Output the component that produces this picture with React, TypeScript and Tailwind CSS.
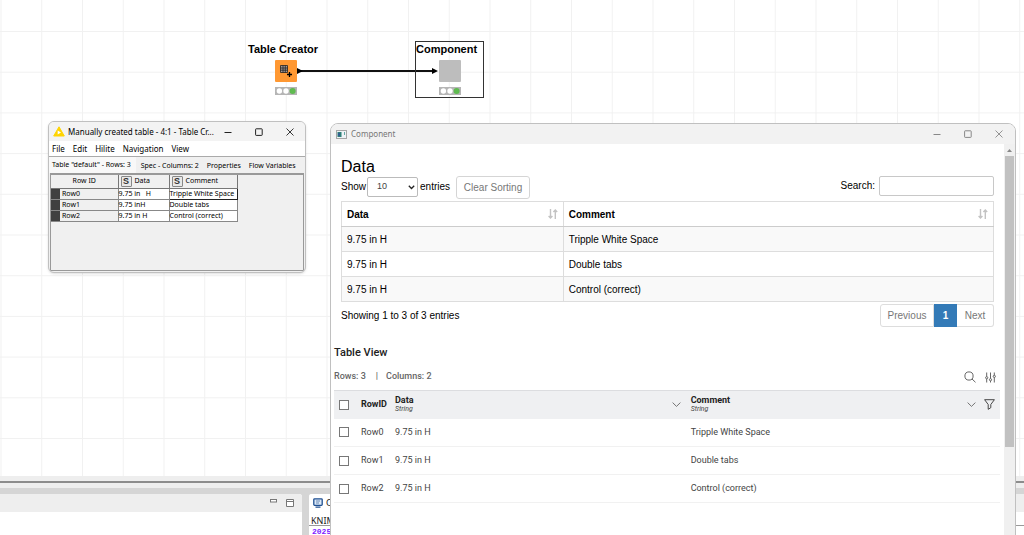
import React from "react";

const records = [
  { id: "Row0", raw: "9.75 in   H", data: "9.75 in H", comment: "Tripple White Space" },
  { id: "Row1", raw: "9.75 inH", data: "9.75 in H", comment: "Double tabs" },
  { id: "Row2", raw: "9.75 in H", data: "9.75 in H", comment: "Control (correct)" },
];

function CanvasGrid() {
  return (
    <svg className="absolute inset-0 h-full w-full" aria-hidden="true">
      <defs>
        <pattern id="grid" x="0.5" y="31" width="40.75" height="40.7" patternUnits="userSpaceOnUse">
          <path d="M0 .5H40.75M.5 0V40.7" stroke="#f1f1f1" strokeWidth="1" fill="none" />
        </pattern>
      </defs>
      <rect width="100%" height="100%" fill="url(#grid)" />
    </svg>
  );
}

function TrafficLight() {
  return (
    <svg width="22" height="8" viewBox="0 0 22 8" aria-hidden="true">
      <rect width="22" height="8" fill="#b5b5b5" />
      <circle cx="4.4" cy="4" r="2.7" fill="#fff" />
      <circle cx="11" cy="4" r="2.7" fill="#fff" />
      <circle cx="17.6" cy="4" r="3" fill="#5fbb50" />
    </svg>
  );
}

function WindowControls({ color }: { color: string }) {
  return (
    <div className={`flex items-center gap-[23px] ${color}`}>
      <button aria-label="Minimize">
        <svg width="8" height="8" viewBox="0 0 8 8" stroke="currentColor"><path d="M.5 4.5h7" /></svg>
      </button>
      <button aria-label="Maximize">
        <svg width="8" height="8" viewBox="0 0 8 8" stroke="currentColor" fill="none"><rect x=".6" y=".8" width="6.6" height="6.6" rx=".6" /></svg>
      </button>
      <button aria-label="Close">
        <svg width="8" height="8" viewBox="0 0 8 8" stroke="currentColor" strokeWidth=".9"><path d="M.5.5l7 7M7.5.5l-7 7" /></svg>
      </button>
    </div>
  );
}

function StringBadge() {
  return (
    <span className="flex h-[11px] w-[11px] items-center justify-center rounded-[1px] border border-[#888] bg-[#e8e8e8] font-['Liberation_Sans',sans-serif] text-[9px] leading-none font-bold text-[#333]">
      S
    </span>
  );
}

function TableWindow() {
  const tab = "px-[3px] leading-[14px]";
  return (
    <section className="absolute top-[121px] left-12 flex h-[152px] w-[258px] flex-col overflow-hidden rounded-md border border-[#c0c0c0] bg-[#f0f0f0] font-['Noto_Sans',sans-serif] text-[7px] text-black shadow-sm">
      <header className="flex h-[19px] shrink-0 items-center bg-[#f3f3f3] pr-[11px] pl-1">
        <svg width="12" height="11" viewBox="0 0 12 11" aria-hidden="true">
          <path d="M6 .8L11.3 10H.7z" fill="#ffd400" stroke="#ffd400" strokeLinejoin="round" />
          <path d="M4.7 4.6L8 6.6 4.7 8.5z" fill="#fff" />
        </svg>
        <span className="ml-[3px] flex-1 text-[8px] whitespace-nowrap">Manually created table - 4:1 - Table Cr...</span>
        <WindowControls color="text-[#222]" />
      </header>
      <nav className="flex h-4 shrink-0 items-center gap-2 border-b border-[#aaa] bg-white px-[3px] text-[8px]">
        {["File", "Edit", "Hilite", "Navigation", "View"].map((m) => (
          <button key={m}>{m}</button>
        ))}
      </nav>
      <div className="flex h-4 shrink-0 items-end gap-[2px] whitespace-nowrap">
        <button className="h-full bg-[#f8f8f8] pr-[5px] pl-[3px]">Table "default" - Rows: 3</button>
        <button className={tab}>Spec - Columns: 2</button>
        <button className={tab}>Properties</button>
        <button className={tab}>Flow Variables</button>
      </div>
      <div className="mx-px mb-px flex-1 border border-t-2 border-[#999]">
        <table className="w-[187px] table-fixed border-collapse text-[7px] leading-[10px] whitespace-pre">
          <colgroup>
            <col className="w-[67px]" />
            <col className="w-[51px]" />
            <col />
          </colgroup>
          <thead>
            <tr className="h-[13px]">
              <th className="border-r border-b border-[#777] p-0 font-normal">Row ID</th>
              <th className="border-r border-b border-[#777] p-0 font-normal">
                <span className="flex items-center gap-[3px] pl-[2px]"><StringBadge />Data</span>
              </th>
              <th className="border-r border-b border-[#777] p-0 font-normal">
                <span className="flex items-center gap-[3px] pl-[2px]"><StringBadge />Comment</span>
              </th>
            </tr>
          </thead>
          <tbody>
            {records.map((r, i) => (
              <tr key={r.id} className="h-[11px]">
                <td className="border-r border-b border-[#888] p-0">
                  <span className="flex h-[10px] items-center"><i className="mr-[2px] h-full w-[9px] bg-[#404040]" />{r.id}</span>
                </td>
                <td className="border-r border-b border-[#888] bg-white p-0">{r.raw}</td>
                <td className={i === 0 ? "border border-[#222] bg-white p-0" : "border-r border-b border-[#888] bg-white p-0"}>{r.comment}</td>
              </tr>
            ))}
          </tbody>
        </table>
      </div>
    </section>
  );
}

function SortIcon() {
  return (
    <svg width="10" height="10" viewBox="0 0 10 10" fill="none" stroke="#c3c3c3" strokeWidth="1.4" aria-hidden="true">
      <path d="M2.5 0v8.5M.6 7l1.9 2 1.9-2M7.3 10V1.5M5.4 3l1.9-2 1.9 2" />
    </svg>
  );
}

function DataTable() {
  return (
    <section className="px-[10px] font-['Liberation_Sans',sans-serif] text-[10px] text-black">
      <h1 className="pt-[14px] text-[16px] leading-[18px]">Data</h1>
      <div className="flex h-[25px] items-start">
        <label htmlFor="page-size" className="mr-px leading-[21px]">Show</label>
        <span className="relative flex pt-px">
          <select id="page-size" className="h-5 w-[51px] appearance-none rounded-[2px] border border-[#bbb] bg-white pl-[9px] text-[9px] text-[#444]">
            <option>10</option>
          </select>
          <svg className="pointer-events-none absolute top-[9px] right-[3px]" width="7" height="5" viewBox="0 0 7 5" fill="none" stroke="#222" strokeWidth="1.3"><path d="M.8.8l2.7 2.7L6.2.8" /></svg>
        </span>
        <span className="ml-[2px] leading-[21px]">entries</span>
        <button className="ml-[6px] h-[23px] w-[74px] rounded-[3px] border border-[#d5d5d5] text-[#777]">Clear Sorting</button>
        <label htmlFor="search" className="ml-auto leading-[19px]">Search:</label>
        <input id="search" className="ml-1 h-5 w-[115px] rounded-[2px] border border-[#c8c8c8]" />
      </div>
      <table className="w-full table-fixed border-collapse border border-[#ddd] text-left">
        <colgroup>
          <col className="w-[34%]" />
          <col />
        </colgroup>
        <thead>
          <tr className="h-[25px]">
            {["Data", "Comment"].map((h) => (
              <th key={h} className="border border-b-[#ccc] border-[#ddd] px-[5px] py-0">
                <span className="flex items-center justify-between">{h}<SortIcon /></span>
              </th>
            ))}
          </tr>
        </thead>
        <tbody>
          {records.map((r) => (
            <tr key={r.id} className="h-[25px] odd:bg-[#f9f9f9]">
              <td className="border border-[#ddd] px-[5px] py-0">{r.data}</td>
              <td className="border border-[#ddd] px-[5px] py-0">{r.comment}</td>
            </tr>
          ))}
        </tbody>
      </table>
      <div className="mt-px flex h-6 items-center">
        <span>Showing 1 to 3 of 3 entries</span>
        <nav className="ml-auto flex h-[23px] text-[#777]" aria-label="Pages">
          <button className="w-[54px] rounded-l-[3px] border border-[#ddd]">Previous</button>
          <button className="w-[23px] bg-[#337ab7] font-bold text-white">1</button>
          <button className="w-[37px] rounded-r-[3px] border border-l-0 border-[#ddd]">Next</button>
        </nav>
      </div>
    </section>
  );
}

function Chevron() {
  return (
    <svg width="9" height="5" viewBox="0 0 9 5" fill="none" stroke="#666" strokeWidth=".9" aria-hidden="true"><path d="M.6.6l3.9 3.8L8.4.6" /></svg>
  );
}

const box = "block h-[10px] w-[10px] appearance-none border border-[#777] bg-white";

function TableView() {
  return (
    <section className="mt-[18px] pr-1 pl-[3px] font-[Roboto,sans-serif] text-[9px] text-[#444]">
      <h2 className="text-[11px] leading-4 font-medium text-[#222]">Table View</h2>
      <div className="mt-2 flex h-4 items-center font-medium text-[#666]">
        <span>Rows: 3</span>
        <span className="mr-2 ml-[10px]">|</span>
        <span>Columns: 2</span>
        <button className="mr-[9px] ml-auto" aria-label="Search rows">
          <svg width="12" height="12" viewBox="0 0 12 12" fill="none" stroke="#555" strokeWidth=".9"><circle cx="5" cy="5" r="4.1" /><path d="M8 8l3.5 3.3" /></svg>
        </button>
        <button className="mr-1" aria-label="Settings">
          <svg width="11" height="11" viewBox="0 0 11 11" fill="none" stroke="#555" strokeWidth=".9">
            <path d="M1.7.5v4M1.7 7v3.5M5.5.5v6M5.5 9v1.5M9.3.5v2.7M9.3 5.7v4.8" />
            <circle cx="1.7" cy="5.7" r="1.1" /><circle cx="5.5" cy="7.7" r="1.1" /><circle cx="9.3" cy="4.4" r="1.1" />
          </svg>
        </button>
      </div>
      <table className="mt-[5px] w-full table-fixed border-collapse text-left">
        <colgroup>
          <col className="w-[27px]" />
          <col className="w-[34px]" />
          <col />
          <col className="w-[43%]" />
          <col className="w-[23px]" />
        </colgroup>
        <thead>
          <tr className="h-7 border-t border-[#dcdde0] bg-[#eff0f2] text-[#222]">
            <th className="p-0 pl-[5px]"><input type="checkbox" aria-label="Select all rows" className={box} /></th>
            <th className="p-0">RowID</th>
            {["Data", "Comment"].map((h) => (
              <th key={h} className="p-0">
                <span className={h === "Data" ? "flex items-center justify-between pr-[10px]" : "flex items-center justify-between pr-px"}>
                  <span className="flex flex-col leading-[10px]">
                    {h}
                    <i className="text-[7px] leading-[9px] font-normal text-[#444]">String</i>
                  </span>
                  <Chevron />
                </span>
              </th>
            ))}
            <th className="p-0">
              <button className="block pl-[7px]" aria-label="Filter">
                <svg width="11" height="11" viewBox="0 0 11 11" fill="none" stroke="#333" strokeWidth=".9"><path d="M.6.7h9.8L6.8 5.5v3.2L4.2 10.3V5.5z" strokeLinejoin="round" /></svg>
              </button>
            </th>
          </tr>
        </thead>
        <tbody>
          {records.map((r) => (
            <tr key={r.id} className="h-[28px] border-b border-[#f1f1f1]">
              <td className="p-0 pl-[5px]"><input type="checkbox" aria-label={`Select ${r.id}`} className={box} /></td>
              <td className="p-0">{r.id}</td>
              <td className="p-0">{r.data}</td>
              <td className="p-0">{r.comment}</td>
              <td className="p-0" />
            </tr>
          ))}
        </tbody>
      </table>
    </section>
  );
}

function ComponentWindow() {
  return (
    <section className="absolute top-[123px] right-2 -bottom-2 left-[330px] flex flex-col overflow-hidden rounded-lg border border-[#c0c0c0] bg-white">
      <header className="flex h-5 shrink-0 items-center bg-[#f2f2f2] pr-3 pl-[5px] font-['Noto_Sans',sans-serif] text-[8px] text-[#777]">
        <svg width="11" height="9" viewBox="0 0 11 9" aria-hidden="true">
          <rect x=".5" y=".5" width="10" height="8" fill="#eef3f6" stroke="#a5a5a5" />
          <path d="M1.5 2h4v5h-4z" fill="#2d8078" /><path d="M2 3h2v3H2z" fill="#315d8e" /><path d="M8 2h1v3H8z" fill="#62a7a1" />
        </svg>
        <span className="ml-1 flex-1">Component</span>
        <WindowControls color="text-[#888]" />
      </header>
      <div className="flex min-h-0 flex-1">
        <main className="min-w-0 flex-1 overflow-hidden">
          <DataTable />
          <TableView />
        </main>
        <div className="flex w-[11px] flex-col items-center bg-[#f0f0f0]" aria-hidden="true">
          <svg className="h-3 w-[11px] shrink-0" viewBox="0 0 11 12"><path d="M3 8l2.5-3L8 8z" fill="#888" /></svg>
          <div className="h-[73%] w-[9px] bg-[#c1c1c1]" />
        </div>
      </div>
    </section>
  );
}

function Workflow() {
  return (
    <div className="font-['Liberation_Sans',sans-serif] text-[11px] leading-3 font-bold text-black">
      <svg className="absolute top-[65px] left-[297px]" width="142" height="12" viewBox="0 0 142 12" aria-hidden="true">
        <path d="M4 6h132" stroke="#111" strokeWidth="1.8" />
        <path d="M0 3l6 3-6 3zM135 3l6 3-6 3z" fill="#000" />
      </svg>
      <div className="absolute top-[43px] left-[248px] flex w-[76px] flex-col items-center whitespace-nowrap">
        <span className="self-start">Table Creator</span>
        <svg className="mt-[5px] mb-[5px]" width="22" height="22" viewBox="0 0 22 22" aria-hidden="true">
          <rect width="22" height="22" rx="1" fill="#ff9832" />
          <path d="M5.5 5.5h7v7h-7zM8 5.5v7M10.3 5.5v7M5.5 8h7M5.5 10.2h7" fill="#a39a9a" stroke="#222" strokeWidth=".8" />
          <path d="M14.5 12v5M12 14.5h5" stroke="#000" strokeWidth="1.3" />
        </svg>
        <TrafficLight />
      </div>
      <div className="absolute top-[41px] left-[415px] flex h-[57px] w-[69px] flex-col items-center border border-[#333] pt-px">
        <span className="self-start">Component</span>
        <span className="my-[5px] h-[22px] w-[22px] shrink-0 rounded-[1px] bg-[#bdbdbd]" />
        <span className="block h-2"><TrafficLight /></span>
      </div>
    </div>
  );
}

export default function App() {
  return (
    <div className="relative flex h-screen flex-col overflow-hidden bg-white">
      <div className="relative flex-1">
        <CanvasGrid />
        <Workflow />
      </div>
      <div className="h-[5px] bg-[#eee]" />
      <div className="h-[2px] bg-[#8c8c8c]" />
      <div className="h-[5px] bg-[#eee]" />
      <div className="flex h-[47px] gap-[7px] bg-[#d5d5d5] pt-[6px]">
        <div className="w-[302px] rounded-tr-[3px] bg-white">
          <div className="flex h-[18px] justify-end gap-[9px] rounded-tr-[3px] bg-[#eee] pt-[5px] pr-2">
            <button className="flex h-2" aria-label="Minimize panel">
              <svg width="7" height="8" viewBox="0 0 7 8"><rect x=".5" y=".5" width="6" height="2.5" fill="#fff" stroke="#777" /></svg>
            </button>
            <button className="flex h-2" aria-label="Maximize panel">
              <svg width="8" height="8" viewBox="0 0 8 8"><path d="M.5.5h7v7h-7zM.5 2.5h7" fill="#fff" stroke="#777" /></svg>
            </button>
          </div>
        </div>
        <div className="flex-1 overflow-hidden rounded-tl-[3px] bg-white font-['Noto_Sans',sans-serif] text-[9px] text-[#222]">
          <div className="flex h-[18px] bg-[#eee]">
            <span className="flex items-center gap-[3px] bg-white px-1">
              <svg width="10" height="10" viewBox="0 0 10 10" aria-hidden="true">
                <rect x=".8" y=".8" width="8.4" height="6.6" rx=".8" fill="#dce9f7" stroke="#1e4f91" strokeWidth="1.3" />
                <path d="M3 3h4M3 5h3" stroke="#496fa5" strokeWidth=".8" /><path d="M2.5 9.2h5" stroke="#1e4f91" strokeWidth="1.2" />
              </svg>
              Console
            </span>
          </div>
          <div className="h-[14px] border-b border-[#999] pl-[2px] leading-[17px]">KNIME Console</div>
          <div className="pl-[3px] font-['Liberation_Mono',monospace] text-[8px] leading-3 font-bold text-[#8020ff]">2025</div>
        </div>
      </div>
      <TableWindow />
      <ComponentWindow />
    </div>
  );
}
